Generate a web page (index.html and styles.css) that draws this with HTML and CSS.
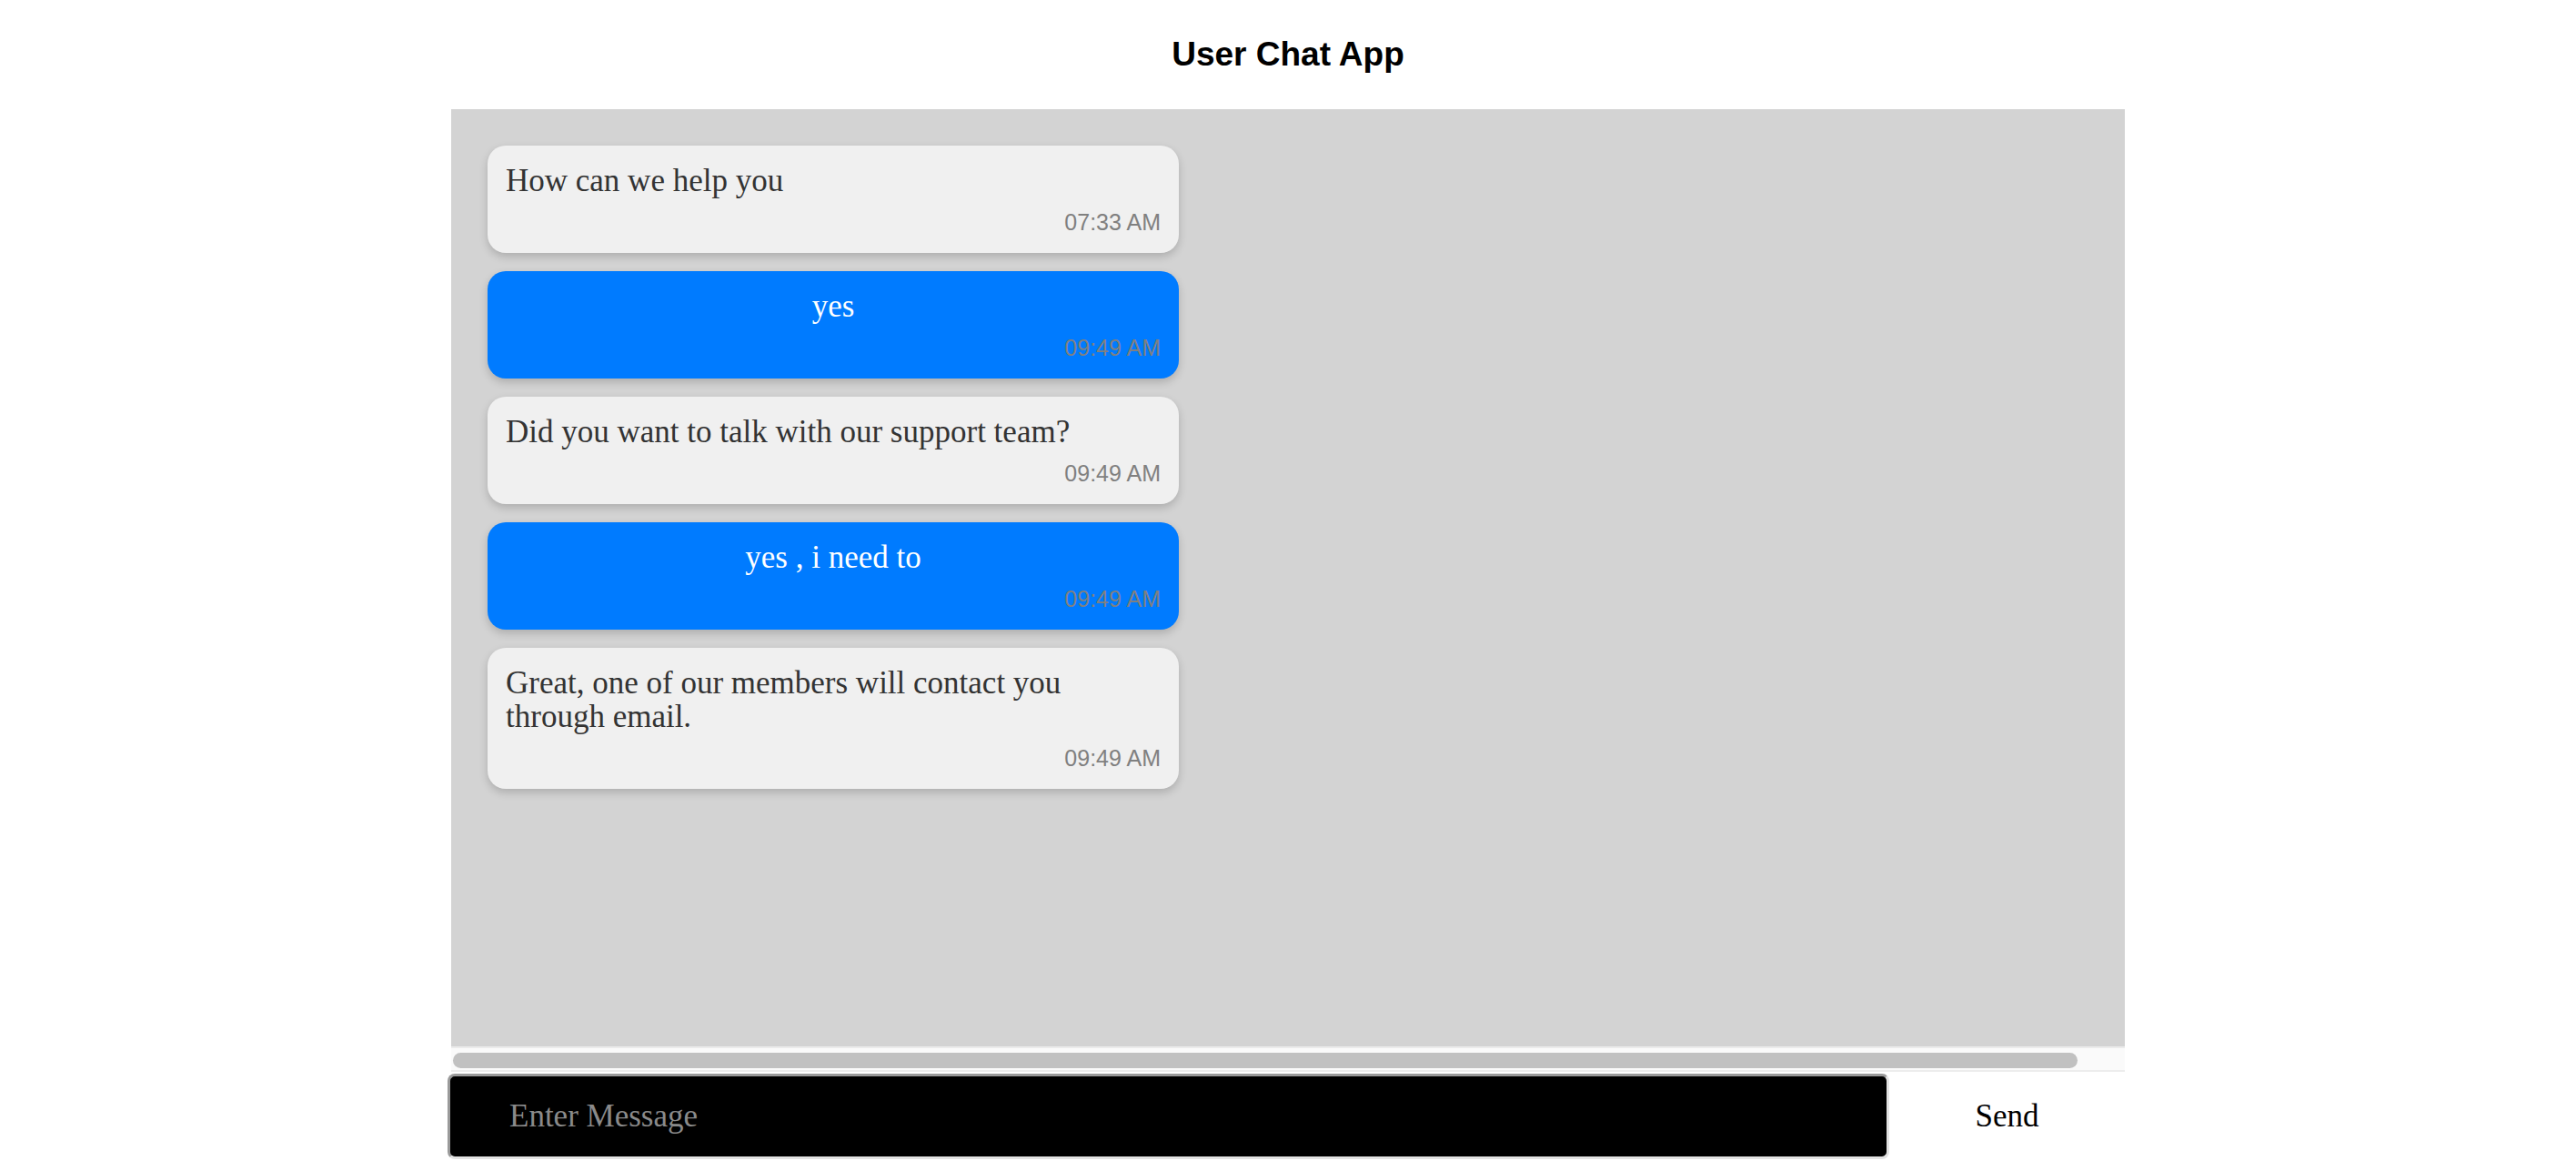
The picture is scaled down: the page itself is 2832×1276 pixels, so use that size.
FILE: index.html
```html
<!DOCTYPE html>
<html lang="en">
<head>
<meta charset="utf-8">
<title>User Chat App</title>
<link rel="stylesheet" href="styles.css">
</head>
<body>
<div class="app">
  <header class="header"><h1 class="title">User Chat App</h1></header>
  <main class="chat">
    <div class="bubble bubble-in">
      <div class="msg">How can we help you</div>
      <div class="time">07:33 AM</div>
    </div>
    <div class="bubble bubble-out">
      <div class="msg">yes</div>
      <div class="time">09:49 AM</div>
    </div>
    <div class="bubble bubble-in">
      <div class="msg">Did you want to talk with our support team?</div>
      <div class="time">09:49 AM</div>
    </div>
    <div class="bubble bubble-out">
      <div class="msg">yes , i need to</div>
      <div class="time">09:49 AM</div>
    </div>
    <div class="bubble bubble-in">
      <div class="msg">Great, one of our members will contact you through email.</div>
      <div class="time">09:49 AM</div>
    </div>
  </main>
  <div class="scrollbar"><div class="thumb"></div></div>
  <form class="composer">
    <input class="input" type="text" placeholder="Enter Message">
    <button class="send" type="button">Send</button>
  </form>
</div>
</body>
</html>
```

FILE: styles.css
```css
html, body {
  margin: 0;
  padding: 0;
  background: #ffffff;
}

body {
  font-family: "Liberation Serif", serif;
}

.app {
  width: 1840px;
  margin: 0 auto;
}

.header {
  height: 120px;
  display: flex;
  align-items: center;
  justify-content: center;
}

.title {
  margin: 0;
  font-family: "Liberation Sans", Arial, sans-serif;
  font-weight: 700;
  font-size: 37px;
  line-height: 42px;
  color: #000;
}

.chat {
  height: 1030px;
  box-sizing: border-box;
  padding: 40px;
  background: #d3d3d3;
  display: flex;
  flex-direction: column;
  align-items: flex-start;
  gap: 20px;
}

.bubble {
  width: 760px;
  box-sizing: border-box;
  padding: 20px;
  border-radius: 20px;
  box-shadow: 0 4px 10px rgba(0, 0, 0, 0.18);
}

.bubble-in {
  background: #f0f0f0;
  color: #333333;
}

.bubble-out {
  background: #007bff;
  color: #ffffff;
}

.bubble-out .msg {
  text-align: center;
}

.msg {
  font-family: "Liberation Serif", serif;
  font-size: 35px;
  line-height: 37px;
}

.time {
  margin-top: 13px;
  text-align: right;
  font-family: "Liberation Sans", Arial, sans-serif;
  font-size: 25px;
  line-height: 28px;
  color: #808080;
}

.scrollbar {
  height: 28px;
  box-sizing: border-box;
  border-top: 2px solid #ebebeb;
  border-bottom: 2px solid #ededed;
  background: #fafafa;
  padding: 5px 52px 2px 2px;
}

.thumb {
  height: 17px;
  border-radius: 9px;
  background: #c1c1c1;
}

.composer {
  margin: 2px 0 0 0;
  display: flex;
  height: 94px;
}

.input {
  margin: 0 0 0 -4px;
  width: 1585px;
  height: 94px;
  box-sizing: border-box;
  padding: 0 0 0 65px;
  background: #000000;
  color: #ffffff;
  border-style: solid;
  border-width: 3px;
  border-color: #9a9a9a #e2e2e2 #e2e2e2 #9a9a9a;
  border-radius: 8px;
  font-family: "Liberation Serif", serif;
  font-size: 35px;
  outline: none;
}

.input::placeholder {
  color: #8a8a8a;
}

.send {
  flex: 1;
  height: 94px;
  margin: 0;
  padding: 0;
  border: none;
  background: #ffffff;
  color: #000000;
  font-family: "Liberation Serif", serif;
  font-size: 35px;
}
```
